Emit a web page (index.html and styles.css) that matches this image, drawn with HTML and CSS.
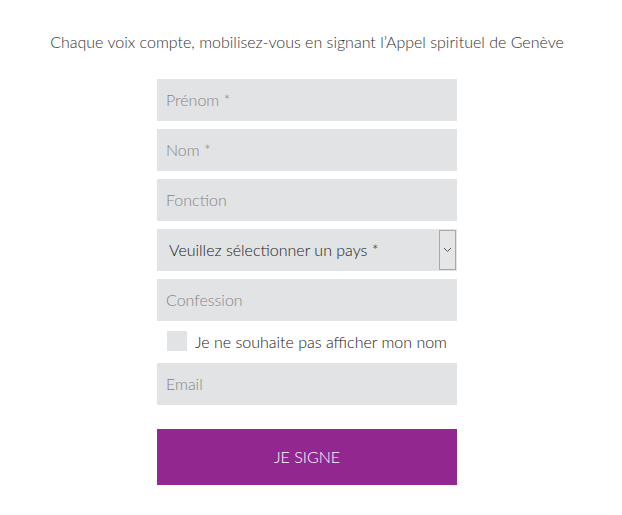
FILE: index.html
```html
<!DOCTYPE html>
<html lang="fr">
<head>
    <meta charset="UTF-8">
    <meta name="viewport" content="width=device-width, initial-scale=1.0">
    <title>Appel spirituel de Genève</title>
    <link rel="stylesheet" href="styles.css">
</head>
<body>
    <div class="petition">
        <p class="intro">Chaque voix compte, mobilisez-vous en signant l’Appel spirituel de Genève</p>

        <form class="sign-form" action="#" method="POST">
            <input type="text" name="firstname" placeholder="Prénom *" required>
            <input type="text" name="lastname" placeholder="Nom *" required>
            <input type="text" name="function" placeholder="Fonction">

            <div class="select-wrap">
                <select name="country" required>
                    <option value="">Veuillez sélectionner un pays *</option>
                    <option value="ch">Suisse</option>
                    <option value="fr">France</option>
                </select>
                <span class="select-arrow">
                    <svg width="9" height="6" viewBox="0 0 9 6"><path d="M1 1l3.5 3.5L8 1" fill="none" stroke="#555" stroke-width="1"/></svg>
                </span>
            </div>

            <input type="text" name="confession" placeholder="Confession">

            <label class="check-row">
                <input type="checkbox" name="anonymous">
                <span>Je ne souhaite pas afficher mon nom</span>
            </label>

            <input type="email" name="email" placeholder="Email">

            <button type="submit">JE SIGNE</button>
        </form>
    </div>
</body>
</html>
```

FILE: styles.css
```css
body {
    margin: 0;
    font-family: 'Lato', sans-serif;
    background: #fff;
    color: #555;
}

.petition {
    width: 614px;
    padding-top: 32px;
}

.intro {
    margin: 0 0 28px;
    text-align: center;
    font-size: 16px;
    font-weight: 300;
    line-height: 19px;
    color: #333;
}

.sign-form {
    width: 300px;
    margin: 0 auto;
    display: flex;
    flex-direction: column;
    gap: 8px;
}

.sign-form input[type="text"],
.sign-form input[type="email"] {
    height: 42px;
    padding: 0 9px 2px;
    border: none;
    background: #e2e3e5;
    font-family: 'Lato', sans-serif;
    font-size: 16px;
    font-weight: 300;
    color: #222;
    box-sizing: border-box;
    outline: none;
}

.sign-form input::placeholder {
    color: #858585;
}

.select-wrap {
    position: relative;
    height: 42px;
    background: #e2e3e5;
}

.select-wrap select {
    width: 100%;
    height: 100%;
    padding: 0 0 2px 12px;
    border: none;
    background: transparent;
    font-family: 'Lato', sans-serif;
    font-size: 16px;
    font-weight: 300;
    color: #1a1a1a;
    appearance: none;
    outline: none;
}

.select-arrow {
    position: absolute;
    top: 1px;
    right: 1px;
    width: 15px;
    height: 38px;
    border: 1px solid #a8a8a8;
    background: #e6e6e6;
    display: flex;
    align-items: center;
    justify-content: center;
    pointer-events: none;
}

.check-row {
    display: flex;
    align-items: center;
    gap: 8px;
    height: 24px;
    margin-bottom: 2px;
    padding-left: 10px;
    font-size: 16px;
    font-weight: 300;
    color: #222;
}

.check-row input {
    width: 20px;
    height: 20px;
    margin: 0;
    appearance: none;
    background: #e2e3e5;
}

.sign-form button {
    height: 56px;
    margin-top: 16px;
    padding-bottom: 2px;
    border: none;
    background: #92278f;
    color: #fff;
    font-family: 'Lato', sans-serif;
    font-size: 16px;
    font-weight: 300;
    cursor: pointer;
}
```
